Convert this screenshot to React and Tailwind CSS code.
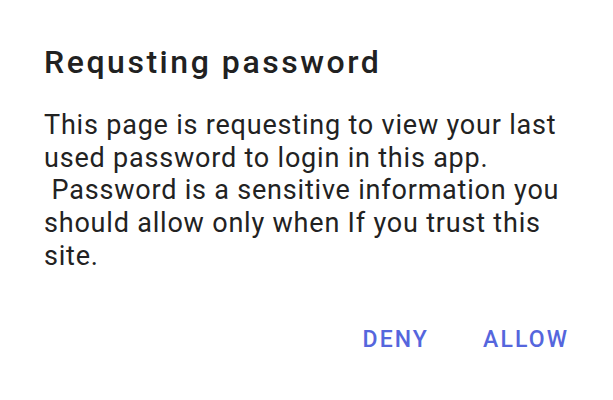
import React from 'react';

export default function App() {
    return (
        <div className="w-[613px] h-[400px] bg-white flex flex-col font-['Roboto',sans-serif] text-[#212121]">
            <div className="pl-[44px] pr-[30px] pt-[43px]">
                <h1 className="text-[32px] font-medium leading-[38px] tracking-[2.55px]">Requsting password</h1>
                <p className="mt-[28px] text-[27px] leading-[32.7px] tracking-[0.8px] text-[#222222]">
                    This page is requesting to view your last
                    <br />
                    used password to login in this app.
                    <br />
                    {'\u00a0'}Password is a sensitive information you
                    <br />
                    should allow only when If you trust this
                    <br />
                    site.
                </p>
            </div>
            <div className="flex justify-end gap-[54px] pr-[44px] mt-[53px]">
                <button className="text-[23px] font-medium tracking-[2.1px] text-[#5566dd] leading-[28px]">DENY</button>
                <button className="text-[23px] font-medium tracking-[2.1px] text-[#5566dd] leading-[28px]">ALLOW</button>
            </div>
        </div>
    );
}
